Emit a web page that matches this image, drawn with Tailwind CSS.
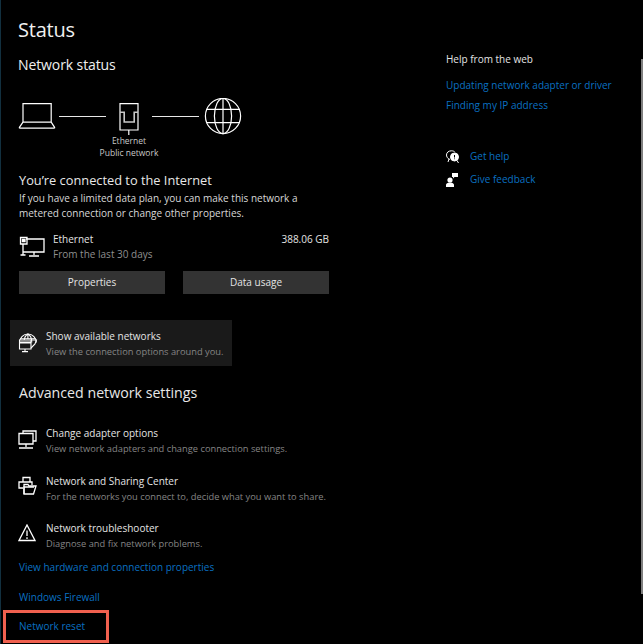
<!DOCTYPE html>
<html lang="en">
<head>
    <meta charset="UTF-8">
    <title>Status</title>
    <script src="https://cdn.jsdelivr.net/npm/@tailwindcss/browser@4"></script>
</head>
<body class="bg-black">
    <div class="w-[643px] h-[644px] overflow-hidden bg-black border-l border-l-[#12303f] flex font-['Open_Sans',sans-serif] text-white">
        <!-- left column -->
        <div class="w-[427px] pl-[18px] pt-[17px] shrink-0">
            <h1 class="-ml-[1px] text-[20px] leading-[26px] tracking-[-0.2px] text-[#f0f0f0]">Status</h1>
            <h2 class="-ml-[1px] mt-[12px] text-[14px] leading-[20px] tracking-[-0.1px] text-[#f0f0f0]">Network status</h2>

            <!-- connection diagram -->
            <div class="mt-[23px] flex items-start -ml-[1px]">
                <svg class="w-[38px] h-[30px] mt-[2px] shrink-0" viewBox="0 0 38 30" fill="none" stroke="white" stroke-width="1.2">
                    <path d="M5 3.6H33.2V22.2H5Z" />
                    <path d="M5 22.2L1.4 27.4Q1 28.2 2 28.2H36Q37 28.2 36.6 27.4L33.2 22.2" />
                </svg>
                <div class="w-[47px] h-px bg-[#e8e8e8] mt-[18px] ml-[3px]"></div>
                <div class="w-[46px] flex justify-center shrink-0">
                    <svg class="w-[20px] h-[32px] mt-[5px]" viewBox="0 0 20 32" fill="none" stroke="white" stroke-width="1.2">
                        <path d="M1 0.6H19V27H1Z" />
                        <path d="M1 9.3H5.2V19H15.2V9.3H19" stroke="#c8c8c8" stroke-width="1.6" />
                        <path d="M9.8 27V32" />
                    </svg>
                </div>
                <div class="w-[47px] h-px bg-[#e8e8e8] mt-[18px]"></div>
                <svg class="w-[38px] h-[38px] ml-[5px] shrink-0" viewBox="0 0 38 38" fill="none" stroke="white" stroke-width="1.2">
                    <circle cx="19" cy="18" r="17.6" />
                    <ellipse cx="19" cy="18" rx="8.6" ry="17.6" />
                    <path d="M2.6 11.4H35.4M2.6 24.6H35.4M19 0.4V35.6" />
                </svg>
            </div>
            <div class="w-[220px] -mt-[1px] text-center text-[8.5px] leading-[12px] text-[#c8c8c8]">
                <p>Ethernet</p>
                <p>Public network</p>
            </div>

            <h3 class="mt-[12px] text-[12.8px] leading-[18px] text-[#e8e8e8]">You’re connected to the Internet</h3>
            <p class="mt-[2px] w-[300px] text-[10px] leading-[15px] text-[#d8d8d8]">If you have a limited data plan, you can make this network a metered connection or change other properties.</p>

            <!-- ethernet usage -->
            <div class="mt-[11px] w-[310px] flex">
                <svg class="w-[26px] h-[22px] mt-[4px] shrink-0" viewBox="0 0 26 22" fill="none" stroke="white" stroke-width="1.3">
                    <path d="M7 3H25V16H4" />
                    <path d="M1.5 1.5H8V8H1.5Z" />
                    <path d="M3.4 3.4H6V5.6H3.4Z" fill="white" />
                    <path d="M4 8V19H1.5M4 19H6.5M15 16V19M10 20H20" />
                </svg>
                <div class="ml-[8px] flex-1 text-[10px] leading-[15px]">
                    <p class="flex justify-between text-[#e4e4e4]"><span>Ethernet</span><span>388.06 GB</span></p>
                    <p class="text-[#8f8f8f]">From the last 30 days</p>
                </div>
            </div>
            <div class="mt-[9px] w-[310px] flex gap-[18px] text-[10px]">
                <div class="w-[146px] h-[23px] bg-[#333333] flex items-center justify-center text-[#e4e4e4]">Properties</div>
                <div class="w-[146px] h-[23px] bg-[#333333] flex items-center justify-center text-[#e4e4e4]">Data usage</div>
            </div>

            <!-- show available networks -->
            <div class="mt-[26px] -ml-[9px] w-[222px] h-[46px] bg-[#1a1a1a] flex items-center">
                <svg class="w-[20px] h-[20px] ml-[8px] shrink-0" viewBox="0 0 20 20" fill="none" stroke="white" stroke-width="1.1">
                    <path d="M1.5 9.5A8.4 8.4 0 0 1 18.4 9.5" />
                    <path d="M6 9.5C6 5 8 2 9.9 1C11.8 2 13.8 5 13.8 9.5M9.9 1V6M2.4 5.8H17.4" />
                    <path d="M1.5 7H13V16H1.5Z" fill="#1a1a1a" />
                    <path d="M1.5 9.5H13" stroke-width="2" />
                    <path d="M13 7H18.4L17 11L13 15" />
                    <path d="M7 16V18M4 18.6H10" />
                </svg>
                <div class="ml-[8px] mt-[1px] leading-[15px] whitespace-nowrap">
                    <p class="text-[10px] text-[#e4e4e4]">Show available networks</p>
                    <p class="text-[9.3px] text-[#858585]">View the connection options around you.</p>
                </div>
            </div>

            <h3 class="mt-[17px] text-[14.2px] leading-[20px] text-[#e8e8e8]">Advanced network settings</h3>

            <!-- advanced rows -->
            <div class="mt-[23px] flex -ml-[1px]">
                <svg class="w-[19px] h-[20px] mt-[4px] shrink-0" viewBox="0 0 19 20" fill="none" stroke="white" stroke-width="1.3">
                    <path d="M5 3.5V1H18V11H15" />
                    <path d="M1 3.5H15V14H1Z" />
                    <path d="M8 14V17M1 18H15" />
                </svg>
                <div class="ml-[9px] leading-[15px]">
                    <p class="text-[10px] text-[#e4e4e4]">Change adapter options</p>
                    <p class="text-[9.3px] text-[#858585]">View network adapters and change connection settings.</p>
                </div>
            </div>
            <div class="mt-[18px] flex -ml-[1px]">
                <svg class="w-[19px] h-[20px] mt-[2px] shrink-0" viewBox="0 0 19 20" fill="none" stroke="white" stroke-width="1.3">
                    <path d="M5 6V1.5H12V6" />
                    <path d="M5 12H1V6H14V9" />
                    <path d="M6 8.5H10L11 10H18L15.5 18H6Z" />
                    <path d="M6 18V11H16" />
                </svg>
                <div class="ml-[9px] leading-[15px]">
                    <p class="text-[10px] text-[#e4e4e4]">Network and Sharing Center</p>
                    <p class="text-[9.3px] text-[#858585]">For the networks you connect to, decide what you want to share.</p>
                </div>
            </div>
            <div class="mt-[17px] flex -ml-[1px]">
                <svg class="w-[18px] h-[18px] mt-[3px] shrink-0" viewBox="0 0 18 18" fill="none" stroke="white" stroke-width="1.3">
                    <path d="M9 1L17 16.5H1Z" />
                    <path d="M9 6.5V12M9 13.2V15" />
                </svg>
                <div class="ml-[10px] leading-[15px]">
                    <p class="text-[10px] text-[#e4e4e4]">Network troubleshooter</p>
                    <p class="text-[9.3px] text-[#858585]">Diagnose and fix network problems.</p>
                </div>
            </div>

            <p class="mt-[9px] text-[10px] leading-[15px] text-[#0a70c2]">View hardware and connection properties</p>
            <p class="mt-[15px] text-[10px] leading-[15px] text-[#0a70c2]">Windows Firewall</p>
            <p class="mt-[14px] text-[10px] leading-[15px] text-[#0a70c2] relative">
                Network reset
                <span class="absolute left-[-16px] top-[-9px] w-[106px] h-[33px] border-[3px] border-[#f0604f]"></span>
            </p>
        </div>

        <!-- right column -->
        <div class="pl-[18px] pt-[52px] text-[10px] leading-[15px] flex-1">
            <p class="text-[#e4e4e4]">Help from the web</p>
            <p class="mt-[11px] text-[#0a70c2]">Updating network adapter or driver</p>
            <p class="mt-[5px] text-[#0a70c2]">Finding my IP address</p>
            <div class="mt-[36px] flex items-center">
                <svg class="w-[13px] h-[14px] shrink-0" viewBox="0 0 13 14" fill="none" stroke="white" stroke-width="1">
                    <path d="M4 9.5C1 8.5 0.5 6 0.5 5C0.5 2.5 2.5 0.8 5.5 0.8C7 0.8 8.5 1.4 9 2.2" />
                    <circle cx="8.5" cy="7" r="4" fill="white" />
                    <path d="M11 10.5L12.5 13M3 9L2 12" />
                    <path d="M8.5 5V7.5M8.5 8.5V9.2" stroke="black" />
                </svg>
                <span class="ml-[11px] text-[#0a70c2]">Get help</span>
            </div>
            <div class="mt-[8px] flex items-center">
                <svg class="w-[12px] h-[14px] shrink-0" viewBox="0 0 12 14" fill="white">
                    <path d="M6 0H12V4H8.5L7 5.5V4H6Z" />
                    <circle cx="4" cy="7" r="2.6" />
                    <path d="M0 14V12C0 10.5 1.5 9.6 4 9.6C6.5 9.6 8 10.5 8 12V14Z" />
                </svg>
                <span class="ml-[12px] text-[#0a70c2]">Give feedback</span>
            </div>
        </div>
        <!-- scrollbar thumb -->
        <div class="w-[2px] h-[535px] mt-[59px] bg-[#7f7f7f] shrink-0"></div>
    </div>
</body>
</html>
